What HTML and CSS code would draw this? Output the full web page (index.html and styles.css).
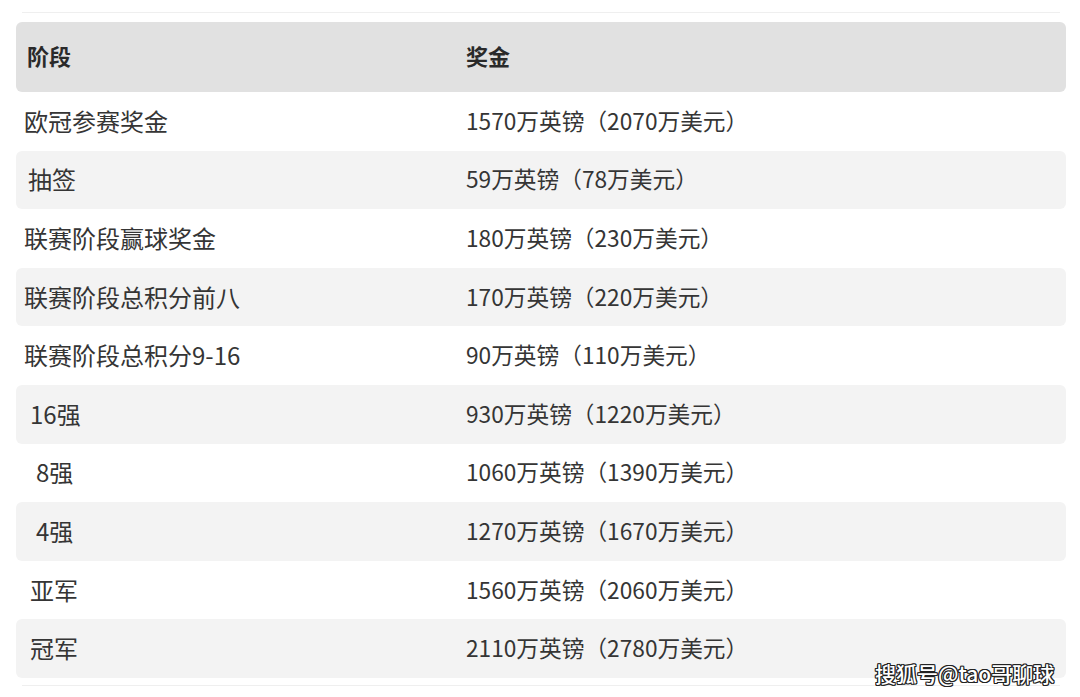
FILE: index.html
```html
<!DOCTYPE html>
<html lang="zh-CN">
<head>
<meta charset="utf-8">
<title>欧冠奖金</title>
<link rel="stylesheet" href="styles.css">
</head>
<body>
<div class="page">
  <div class="rule top-rule"></div>
  <div class="table">
    <div class="row head">
      <div class="cell c1">阶段</div>
      <div class="cell c2">奖金</div>
    </div>
    <div class="row">
      <div class="cell c1">欧冠参赛奖金</div>
      <div class="cell c2">1570万英镑（2070万美元）</div>
    </div>
    <div class="row alt">
      <div class="cell c1 in-sm">抽签</div>
      <div class="cell c2">59万英镑（78万美元）</div>
    </div>
    <div class="row">
      <div class="cell c1">联赛阶段赢球奖金</div>
      <div class="cell c2">180万英镑（230万美元）</div>
    </div>
    <div class="row alt">
      <div class="cell c1">联赛阶段总积分前八</div>
      <div class="cell c2">170万英镑（220万美元）</div>
    </div>
    <div class="row">
      <div class="cell c1">联赛阶段总积分9-16</div>
      <div class="cell c2">90万英镑（110万美元）</div>
    </div>
    <div class="row alt">
      <div class="cell c1 in-md">16强</div>
      <div class="cell c2">930万英镑（1220万美元）</div>
    </div>
    <div class="row">
      <div class="cell c1 in-lg">8强</div>
      <div class="cell c2">1060万英镑（1390万美元）</div>
    </div>
    <div class="row alt">
      <div class="cell c1 in-lg">4强</div>
      <div class="cell c2">1270万英镑（1670万美元）</div>
    </div>
    <div class="row">
      <div class="cell c1 in-md">亚军</div>
      <div class="cell c2">1560万英镑（2060万美元）</div>
    </div>
    <div class="row alt">
      <div class="cell c1 in-md">冠军</div>
      <div class="cell c2">2110万英镑（2780万美元）</div>
    </div>
  </div>
  <div class="rule bottom-rule"></div>
  <div class="watermark">搜狐号@tao哥聊球</div>
</div>
</body>
</html>
```
FILE: styles.css
```css
html, body {
  margin: 0;
  padding: 0;
  background: #ffffff;
}
.page {
  position: relative;
  width: 1080px;
  height: 697px;
  overflow: hidden;
  font-family: "Noto Sans CJK SC", "Noto Sans", sans-serif;
  color: #353535;
}
.rule {
  height: 1px;
  background: #efefef;
  margin: 0 20px 0 22px;
}
.top-rule {
  margin-top: 12px;
}
.table {
  margin: 9px 14px 0 16px;
  display: flex;
  flex-direction: column;
}
.row {
  display: flex;
  align-items: center;
  height: 58.6px;
  border-radius: 6px;
  padding-bottom: 2px;
  box-sizing: border-box;
}
.row.alt {
  background: #f3f3f3;
}
.row.head {
  height: 70px;
  padding-bottom: 4px;
  background: #e1e1e1;
  font-weight: 700;
  font-size: 22px;
  color: #2a2a2a;
}
.cell {
  box-sizing: border-box;
}
.c1 {
  width: 442px;
  padding-left: 8px;
  font-size: 24px;
}
.head .c1 {
  padding-left: 11px;
  font-size: 22px;
}
.c2 {
  padding-left: 8px;
  font-size: 22.7px;
}
.head .c2 {
  font-size: 22px;
}
.in-sm { padding-left: 12px; }
.in-md { padding-left: 14px; }
.in-lg { padding-left: 20px; }
.bottom-rule {
  margin-top: 7px;
}
.watermark {
  position: absolute;
  left: 875px;
  top: 658px;
  font-size: 21px;
  line-height: 30px;
  color: #ffffff;
  font-weight: 500;
  text-shadow: 1px 1px 0 #222, -1px -1px 0 #222, 1px -1px 0 #222, -1px 1px 0 #222, 0 1px 0 #222, 1px 0 0 #222, 0 -1px 0 #222, -1px 0 0 #222;
}
```
